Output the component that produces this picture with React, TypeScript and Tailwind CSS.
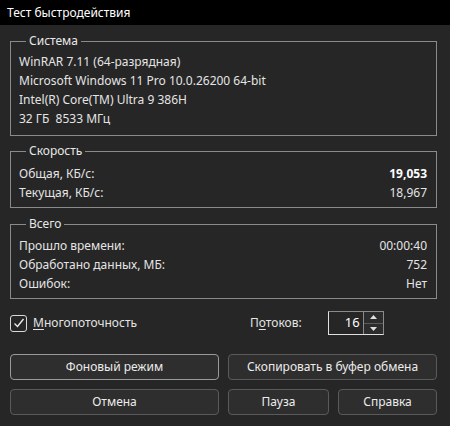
import type { ReactNode } from "react";

const FONT = { fontFamily: '"Noto Sans", "Open Sans", sans-serif' };

function Group({ title, children, className = "" }: { title: string; children: ReactNode; className?: string }) {
  return (
    <fieldset className={`border border-[#8a8a8a] pl-[8px] pr-[9px] pb-[7px] pt-[3px] ${className}`}>
      <legend className="ml-[7px] px-[3px] text-[12px] leading-[16px] text-[#e8e8e8]">{title}</legend>
      {children}
    </fieldset>
  );
}

function Row({ label, value, bold }: { label: string; value?: string; bold?: boolean }) {
  return (
    <div className="flex h-[19px] items-center justify-between">
      <span className="whitespace-pre">{label}</span>
      {value && <span className={bold ? "font-bold text-white" : ""}>{value}</span>}
    </div>
  );
}

function Btn({ children, primary, className = "" }: { children: ReactNode; primary?: boolean; className?: string }) {
  return (
    <button
      type="button"
      className={`flex h-[26px] items-center justify-center rounded-[4px] border bg-[#2e2e2e] text-[12px] text-[#ececec] ${
        primary ? "border-[#9a9a9a]" : "border-[#5a5a5a]"
      } ${className}`}
    >
      {children}
    </button>
  );
}

export default function App() {
  return (
    <div className="flex h-[426px] w-[450px] flex-col bg-[#262626] text-[12px] text-[#e4e4e4]" style={FONT}>
      {/* title bar */}
      <div className="flex h-[25px] items-center bg-black pl-[7px] text-[12px] text-white">Тест быстродействия</div>

      <div className="flex flex-col pl-[10px] pr-[13px] pt-[8px]">
        <Group title="Система" className="h-[103px]">
          <Row label="WinRAR 7.11 (64-разрядная)" />
          <Row label="Microsoft Windows 11 Pro 10.0.26200 64-bit" />
          <Row label="Intel(R) Core(TM) Ultra 9 386H" />
          <Row label="32 ГБ  8533 МГц" />
        </Group>

        <Group title="Скорость" className="mt-[7px] h-[65px]">
          <div className="flex flex-col pt-[2px]">
            <Row label="Общая, КБ/с:" value="19,053" bold />
            <Row label="Текущая, КБ/с:" value="18,967" />
          </div>
        </Group>

        <Group title="Всего" className="mt-[8px] h-[83px]">
          <div className="flex flex-col pt-[1px]">
            <Row label="Прошло времени:" value="00:00:40" />
            <Row label="Обработано данных, МБ:" value="752" />
            <Row label="Ошибок:" value="Нет" />
          </div>
        </Group>

        {/* options row */}
        <div className="mt-[12px] flex h-[24px] items-center">
          <div className="flex items-center">
            <span className="flex h-[17px] w-[17px] items-center justify-center rounded-[3px] border border-[#d8d8d8]">
              <svg width="12" height="12" viewBox="0 0 12 12" fill="none">
                <path d="M1.5 6.5 L4.5 9.5 L10.5 2" stroke="#f0f0f0" strokeWidth="1.3" />
              </svg>
            </span>
            <span className="ml-[6px]">
              <span className="underline underline-offset-2">М</span>ногопоточность
            </span>
          </div>
          <span className="ml-[113px]">
            П<span className="underline underline-offset-2">о</span>токов:
          </span>
          <div className="ml-[26px] flex h-[24px] w-[56px] border border-[#8a8a8a] border-b-[#e0e0e0] border-l-[#e0e0e0]">
            <span className="flex flex-1 items-center justify-end pr-[3px] text-[13px] text-white">16</span>
            <div className="flex w-[20px] flex-col border-l border-[#8a8a8a]">
              <span className="flex flex-1 items-center justify-center border-b border-[#5a5a5a] bg-[#2c2c2c]">
                <svg width="7" height="4" viewBox="0 0 7 4"><path d="M0 4 L3.5 0 L7 4 Z" fill="#e0e0e0" /></svg>
              </span>
              <span className="flex flex-1 items-center justify-center bg-[#2c2c2c]">
                <svg width="7" height="4" viewBox="0 0 7 4"><path d="M0 0 L3.5 4 L7 0 Z" fill="#e0e0e0" /></svg>
              </span>
            </div>
          </div>
        </div>

        {/* buttons */}
        <div className="mt-[19px] grid grid-cols-2 gap-x-[9px]">
          <Btn primary className="h-[25px]">Фоновый режим</Btn>
          <Btn className="h-[25px]">Скопировать в буфер обмена</Btn>
        </div>
        <div className="mt-[9px] flex gap-x-[9px]">
          <Btn className="w-[209px]">Отмена</Btn>
          <Btn className="w-[101px]">Пауза</Btn>
          <Btn className="flex-1">Справка</Btn>
        </div>
      </div>
    </div>
  );
}
